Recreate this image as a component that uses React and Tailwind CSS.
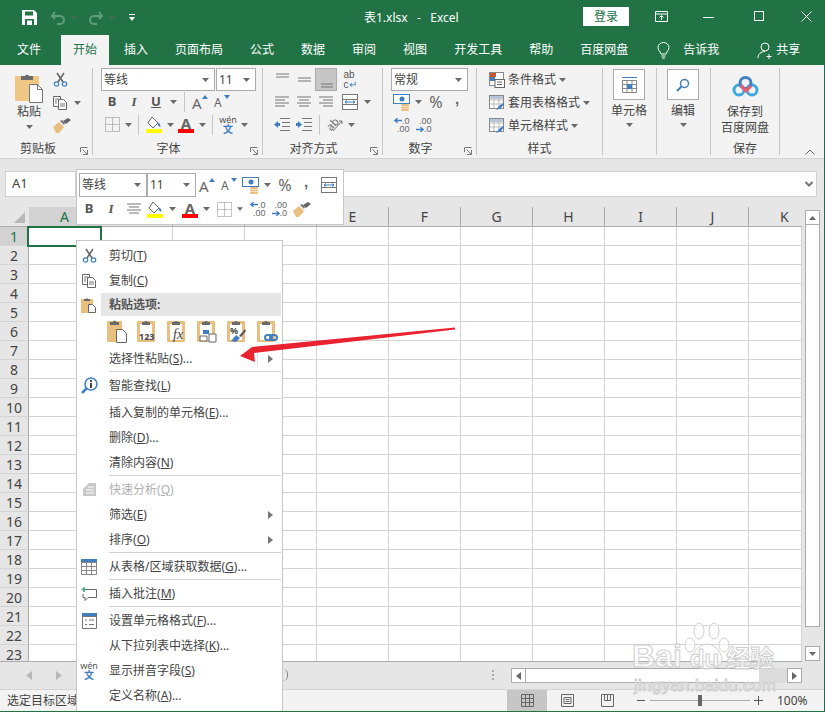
import React from "react";

const Caret = ({ className = "" }) => (
  <svg width="7" height="4" viewBox="0 0 7 4" className={className}><path d="M0 0h7L3.5 4z" fill="#6a6a6a" /></svg>
);

const Launcher = () => (
  <svg width="8" height="8" viewBox="0 0 8 8" fill="none" stroke="#777"><path d="M.5 5V.5H7.5" /><path d="M7.5 3v4.500H3M2.500 2.500l4.500 4.500" /></svg>
);

function Slot({ w = "w-[22px]", className = "", children }) {
  return <div className={`${w} h-full flex items-center justify-center shrink-0 ${className}`}>{children}</div>;
}

const VSep = ({ className = "" }) => <div className={`w-px h-[20px] bg-[#c6c6c6] shrink-0 ${className}`} />;

function Select({ text, w, h = "h-[23px]" }) {
  return (
    <div className={`${w} ${h} bg-white border border-[#ababab] flex items-center justify-between pl-[2px] pr-[5px] text-[12px] text-[#444] shrink-0`}>
      <span>{text}</span>
      <Caret />
    </div>
  );
}

function Group({ w, label, launcher, labelClass = "", children }) {
  return (
    <div className={`${w} relative flex flex-col h-[87px] border-r border-[#c6c6c6] shrink-0`}>
      <div className="flex-1 min-h-0">{children}</div>
      {label && <div className={`h-[12px] leading-[12px] text-[12px] text-[#444] text-center ${labelClass}`}>{label}</div>}
      {launcher && <div className="absolute right-[4px] bottom-0"><Launcher /></div>}
    </div>
  );
}

const Cut = ({ s = 15 }) => (
  <svg width={s} height={s} viewBox="0 0 15 15" fill="none">
    <path d="M4 1l6 9M11 1L5 10" stroke="#666" strokeWidth="1.6" />
    <circle cx="3.500" cy="12" r="2.200" stroke="#3f7fbf" strokeWidth="1.200" />
    <circle cx="11.500" cy="12" r="2.200" stroke="#3f7fbf" strokeWidth="1.200" />
  </svg>
);

const Copy = () => (
  <svg width="15" height="15" viewBox="0 0 15 15" fill="#fff" stroke="#666">
    <path d="M.5 1.500h7v10h-7z" /><path d="M5.500 4.500h5l3 3v7h-8z" />
    <path d="M2 4h4M2 6h2M2 8h2M7 9h5M7 11h5" fill="none" stroke="#777" />
  </svg>
);

const Brush = () => (
  <svg width="18" height="15" viewBox="0 0 18 15">
    <path d="M0 9l6-5 5 5-5 6H3z" fill="#e9bf80" />
    <path d="M7 3l2-1 3 3-1 2z" fill="#777" /><path d="M10 3l5-3 3 2-5 4z" fill="#666" />
  </svg>
);

const Clip = ({ children }) => (
  <svg width="20" height="24" viewBox="0 0 20 24" className="overflow-visible">
    <rect x="0" y="2" width="18" height="21" rx="1" fill="#e9bf80" />
    <rect x="3" y="5" width="12" height="16" fill="#fff" />
    <path d="M5 3h2.500a1.600 1.600 0 013 0H13v3H5z" fill="#6a6a6a" />
    {children}
  </svg>
);

const PasteLarge = () => (
  <svg width="28" height="30" viewBox="0 0 28 30">
    <rect x="0" y="3" width="24" height="25" rx="1" fill="#efc683" />
    <path d="M6 3h4a2.200 2.200 0 014 0h4v4H6z" fill="#6a6a6a" />
    <path d="M14.500 11.500h8l5 5v13h-13z" fill="#fff" stroke="#777" />
    <path d="M22.500 11.500v5h5" fill="none" stroke="#777" />
  </svg>
);

const PasteSmall = () => (
  <svg width="16" height="16" viewBox="0 0 16 16">
    <rect x="0" y="2" width="12" height="14" fill="#e9bf80" />
    <path d="M3 2h2a1.200 1.200 0 012 0h2v2H3z" fill="#6a6a6a" />
    <path d="M7.500 7.500h4l3 3v5h-7z" fill="#fff" stroke="#666" />
  </svg>
);

const Fill = () => (
  <svg width="16" height="17" viewBox="0 0 16 17">
    <path d="M6 1l6 6-5 5-5-5z" fill="#fff" stroke="#666" />
    <path d="M11 6l3 2 .5 3-2-1z" fill="#3f7fbf" />
    <rect x="0" y="13" width="16" height="4" fill="#ffff00" />
  </svg>
);

const FontColor = () => (
  <div className="relative w-[16px] h-[17px] flex justify-center">
    <span className="text-[15px] leading-[14px] font-bold text-[#666]">A</span>
    <div className="absolute bottom-0 left-0 right-0 h-[4px] bg-[#ff0000]" />
  </div>
);

const Borders = () => (
  <svg width="15" height="15" viewBox="0 0 15 15" fill="none" stroke="#888" strokeDasharray="1 1">
    <path d="M.5 .5h14v14H.5zM7.500 .5v14M.5 7.500h14" />
  </svg>
);

const Grow = ({ up }) => (
  <div className="relative w-[16px] h-[15px] flex items-end">
    <span className={`${up ? "text-[15px]" : "text-[12px]"} leading-[14px] text-[#666]`}>A</span>
    <svg width="6" height="4" viewBox="0 0 6 4" className="absolute right-0 top-0">
      <path d={up ? "M0 4h6L3 0z" : "M0 0h6L3 4z"} fill="#3f7fbf" />
    </svg>
  </div>
);

const Lines = ({ kind }) => {
  const d = {
    top: "M2 2h13M2 5h13",
    middle: "M2 6h13M2 9h13",
    bottom: "M3 12h12M3 15h12",
    left: "M1 3h14M1 6h10M1 9h14M1 12h10",
    center: "M1 3h14M3 6h10M1 9h14M3 12h10",
    right: "M1 3h14M5 6h10M1 9h14M5 12h10",
  }[kind];
  return <svg width="16" height="16" viewBox="0 0 16 16" fill="none" stroke="#777"><path d={d} /></svg>;
};

const Merge = () => (
  <svg width="16" height="16" viewBox="0 0 16 16" fill="none">
    <rect x=".5" y=".5" width="15" height="15" fill="#fff" stroke="#777" />
    <path d="M.5 5.500h15M.5 10.500h15" stroke="#777" />
    <path d="M3 8h10M3 8l2-1.500M3 8l2 1.500M13 8l-2-1.500M13 8l-2 1.500" stroke="#3f7fbf" />
  </svg>
);

const Indent = ({ flip }) => (
  <svg width="16" height="13" viewBox="0 0 16 13" fill="none">
    <path d="M6 .5h10M8 4.500h8M8 8.500h8M6 12.500h10" stroke="#777" />
    <path d={flip ? "M6 6.500L2 3v2H0v3h2v2z" : "M0 6.500L4 3v2h2v3H4v2z"} fill="#3f7fbf" />
  </svg>
);

const Orient = () => (
  <div className="relative w-[18px] h-[16px]">
    <span className="absolute left-0 top-[1px] text-[11px] leading-[12px] text-[#666] -rotate-45">ab</span>
    <svg width="18" height="16" viewBox="0 0 18 16" fill="none" className="absolute inset-0">
      <path d="M7 14L16 4M13 4h3v3" stroke="#777" />
    </svg>
  </div>
);

const Currency = () => (
  <svg width="18" height="17" viewBox="0 0 18 17">
    <rect x=".5" y=".5" width="16" height="9" fill="#fff" stroke="#3f7fbf" />
    <circle cx="9" cy="5" r="2.500" fill="#3f7fbf" />
    <rect x="8" y="10" width="8" height="2" rx="1" fill="#e9bf80" />
    <rect x="8" y="12.500" width="8" height="2" rx="1" fill="#e9bf80" />
    <rect x="8" y="15" width="8" height="2" rx="1" fill="#e9bf80" />
  </svg>
);

const Dec = ({ more }) => (
  <div className="w-[15px] h-[16px] relative text-[9px] leading-[8px] text-[#666] flex flex-col items-end font-['Liberation_Sans',sans-serif]">
    <span>{more ? ".00" : ".0"}</span>
    <span>{more ? ".0" : ".00"}</span>
    <svg width="8" height="7" viewBox="0 0 9 7" className={`absolute -left-px ${more ? "bottom-0" : "top-0"}`}>
      <path d={more ? "M0 3.500h7M5 1l3 2.500L5 6" : "M9 3.500H2M4 1L1 3.500 4 6"} fill="none" stroke="#3f7fbf" strokeWidth="1.500" />
    </svg>
  </div>
);

const Wen = () => (
  <div className="flex flex-col items-center leading-none">
    <span className="text-[9px] leading-[9px] text-[#555]">wén</span>
    <span className="text-[10px] leading-[10px] font-bold text-[#3f7fbf]">文</span>
  </div>
);

const StyleIcon = ({ first }) => (
  <svg width="16" height="16" viewBox="0 0 16 16">
    <rect x=".5" y=".5" width="14" height="13" fill="#fff" stroke="#888" />
    {first ? (
      <>
        <rect x="1" y="1" width="6" height="4" fill="#d2532f" />
        <rect x="1" y="5" width="5" height="4" fill="#3f7fbf" />
        <rect x="6" y="7.500" width="9.500" height="8" fill="#fff" stroke="#666" />
        <path d="M8 10h5M8 12.500h5" stroke="#666" />
      </>
    ) : (
      <>
        <rect x="1" y="1" width="13" height="3" fill="#b7c7dc" />
        <path d="M5 1v12M10 1v12M1 5h13M1 9h13" stroke="#bbb" />
        <path d="M7 15l3-4 4-3 1 1-3 4z" fill="#3f7fbf" />
      </>
    )}
  </svg>
);

function TitleBar() {
  return (
    <div className="h-[35px] bg-[#217346] flex items-center relative shrink-0 text-white">
      <div className="flex items-center pl-[22px]">
        <svg width="15" height="15" viewBox="0 0 15 15">
          <path d="M0 0h12l3 3v12H0z" fill="#fff" />
          <rect x="3" y="1.500" width="8" height="4" fill="#217346" />
          <rect x="3" y="9" width="9" height="6" fill="#217346" />
          <rect x="5" y="10.500" width="5" height="4.500" fill="#fff" />
        </svg>
        <svg width="14" height="14" viewBox="0 0 14 14" fill="none" stroke="#5f9d7d" strokeWidth="2" className="ml-[14px]">
          <path d="M1 5h8a4 4 0 010 8H6M4 1L1 5l3 3" />
        </svg>
        <Caret className="ml-[5px] opacity-40" />
        <svg width="14" height="14" viewBox="0 0 14 14" fill="none" stroke="#5f9d7d" strokeWidth="2" className="ml-[12px]">
          <path d="M13 5H5a4 4 0 000 8h3M10 1l3 4-3 3" />
        </svg>
        <Caret className="ml-[5px] opacity-40" />
        <svg width="6" height="7" viewBox="0 0 6 7" className="ml-[14px]"><path d="M0 0h6v1H0zM0 3h6L3 7z" fill="#fff" /></svg>
      </div>
      <div className="absolute left-[364px] text-[12px] whitespace-pre">表1.xlsx   -   Excel</div>
      <div className="absolute left-[583px] top-[7px] w-[46px] h-[19px] bg-white text-[#217346] text-[12px] flex items-center justify-center">登录</div>
      <svg width="13" height="11" viewBox="0 0 13 11" fill="none" stroke="#fff" className="absolute left-[655px] top-[11px]">
        <path d="M.5 .5h12v10H.5zM.5 3h12M6.500 9V5M4.500 6.500l2-2 2 2" />
      </svg>
      <div className="absolute left-[703px] top-[17px] w-[11px] h-px bg-white" />
      <div className="absolute left-[754px] top-[11px] w-[10px] h-[10px] border border-white" />
      <svg width="11" height="11" viewBox="0 0 11 11" stroke="#fff" className="absolute left-[801px] top-[11px]"><path d="M.5 .5l10 10M10.500 .5l-10 10" /></svg>
    </div>
  );
}

function Tabs() {
  const names = ["插入", "页面布局", "公式", "数据", "审阅", "视图", "开发工具", "帮助", "百度网盘"];
  return (
    <div className="h-[30px] bg-[#217346] flex items-center pl-[17px] gap-[27px] text-[12px] text-white relative shrink-0">
      <span className="mr-[5px]">文件</span>
      <div className="h-full -mx-[12px] px-[12px] bg-[#f3f3f3] text-[#217346] flex items-center">开始</div>
      {names.map((n) => <span key={n}>{n}</span>)}
      <svg width="13" height="17" viewBox="0 0 13 17" fill="none" stroke="#fff" className="ml-[2px]">
        <path d="M4 12C3 9 1 8 1 5.500a5.500 5 0 0111 0C12 8 10 9 9 12zM4.500 14h4M5 16h3" />
      </svg>
      <span className="-ml-[14px]">告诉我</span>
      <div className="flex items-center gap-[2px] ml-[11px]">
        <svg width="17" height="17" viewBox="0 0 17 17" fill="none" stroke="#fff">
          <circle cx="8" cy="5" r="4" /><path d="M1 16c0-4 3-6.500 7-6.500M12 12v5M9.500 14.500h5" />
        </svg>
        <span>共享</span>
      </div>
    </div>
  );
}

function Ribbon() {
  return (
    <div className="h-[94px] bg-[#f3f3f3] border-b border-[#d4d4d4] flex pt-[3px] shrink-0">
      <Group w="w-[93px]" label="剪贴板" launcher labelClass="pr-[16px]">
        <div className="flex">
          <div className="w-[53px] pl-[5px] flex flex-col items-center pt-[5px]">
            <PasteLarge />
            <div className="mt-px h-[16px] leading-[16px] text-[12px] text-[#444]">粘贴</div>
            <Caret className="mt-[5px]" />
          </div>
          <div className="flex flex-col gap-[8px] pt-[4px]">
            <Cut />
            <div className="flex items-center gap-[6px]"><Copy /><Caret /></div>
            <Brush />
          </div>
        </div>
      </Group>

      <Group w="w-[170px]" label="字体" launcher labelClass="pr-[18px]">
        <div className="pl-[8px]">
          <div className="flex gap-px">
            <Select text="等线" w="w-[114px]" />
            <Select text="11" w="w-[40px]" />
          </div>
          <div className="flex items-center h-[22px] text-[#555]">
            <Slot><b className="text-[13px]">B</b></Slot>
            <Slot><i className="text-[13px] font-['Liberation_Serif',serif] font-bold">I</i></Slot>
            <Slot><u className="text-[13px] font-bold">U</u></Slot>
            <Slot w="w-[12px]"><Caret /></Slot>
            <VSep className="ml-[5px]" />
            <Slot className="ml-[4px]"><Grow up /></Slot>
            <Slot><Grow /></Slot>
          </div>
          <div className="flex items-center h-[23px]">
            <Slot><Borders /></Slot>
            <Slot w="w-[10px]"><Caret /></Slot>
            <VSep className="ml-[5px]" />
            <Slot className="ml-[4px]"><Fill /></Slot>
            <Slot w="w-[10px]"><Caret /></Slot>
            <Slot><FontColor /></Slot>
            <Slot w="w-[10px]"><Caret /></Slot>
            <VSep className="ml-[5px]" />
            <Slot className="ml-[4px]"><Wen /></Slot>
            <Slot w="w-[10px]"><Caret /></Slot>
          </div>
        </div>
      </Group>

      <Group w="w-[120px]" label="对齐方式" launcher labelClass="pr-[18px]">
        <div className="pl-[8px]">
          <div className="flex h-[23px]">
            <Slot><Lines kind="top" /></Slot>
            <Slot><Lines kind="middle" /></Slot>
            <Slot className="bg-[#c6c6c6] border border-[#ababab]"><Lines kind="bottom" /></Slot>
            <Slot className="ml-[2px]">
              <div className="flex flex-col text-[10px] leading-[10px] text-[#555] font-['Liberation_Sans',sans-serif]">
                <span>ab</span>
                <span>c<span className="text-[#3f7fbf]">↵</span></span>
              </div>
            </Slot>
          </div>
          <div className="flex items-center h-[22px]">
            <Slot><Lines kind="left" /></Slot>
            <Slot><Lines kind="center" /></Slot>
            <Slot><Lines kind="right" /></Slot>
            <Slot className="ml-[2px]"><Merge /></Slot>
            <Slot w="w-[12px]"><Caret /></Slot>
          </div>
          <div className="flex items-center h-[23px]">
            <Slot><Indent /></Slot>
            <Slot><Indent flip /></Slot>
            <VSep className="ml-[4px]" />
            <Slot className="ml-[4px]"><Orient /></Slot>
            <Slot w="w-[10px]"><Caret /></Slot>
          </div>
        </div>
      </Group>

      <Group w="w-[94px]" label="数字" launcher labelClass="pr-[18px]">
        <div className="pl-[8px]">
          <Select text="常规" w="w-[77px]" />
          <div className="flex items-center h-[22px]">
            <Slot><Currency /></Slot>
            <Slot w="w-[10px]"><Caret /></Slot>
            <Slot w="w-[26px]"><span className="text-[16px] text-[#666]">%</span></Slot>
            <Slot w="w-[16px]"><b className="mb-[8px] text-[15px] leading-none text-[#666] font-['Liberation_Sans',sans-serif]">,</b></Slot>
          </div>
          <div className="flex items-center h-[23px]">
            <Slot><Dec /></Slot>
            <Slot><Dec more /></Slot>
          </div>
        </div>
      </Group>

      <Group w="w-[126px]" label="样式">
        <div className="pl-[12px] text-[12px] text-[#444]">
          {[["条件格式", true], ["套用表格格式", false], ["单元格样式", false]].map(([t, f]) => (
            <div key={t} className="flex items-center h-[23px] gap-[3px]">
              <StyleIcon first={f} />
              <span>{t}</span>
              <Caret />
            </div>
          ))}
        </div>
      </Group>

      <Group w="w-[54px]">
        <div className="flex flex-col items-center pr-px text-[12px] text-[#444]">
          <div className="mt-px w-[32px] h-[31px] bg-white border border-[#ababab] flex items-center justify-center">
            <svg width="15" height="17" viewBox="0 0 15 17" fill="none" stroke="#888">
              <path d="M0 1.500h15" stroke="#3f7fbf" /><path d="M.5 4.500h14v12H.5zM.5 8.500h14M.5 12.500h14M5 4.500v12M10 4.500v12" />
              <rect x="5" y="8" width="5" height="5" fill="#3f7fbf" stroke="none" />
            </svg>
          </div>
          <div className="mt-[3px] h-[16px] leading-[16px]">单元格</div>
          <Caret className="mt-[4px]" />
        </div>
      </Group>

      <Group w="w-[54px]">
        <div className="flex flex-col items-center pr-px text-[12px] text-[#444]">
          <div className="mt-px w-[32px] h-[31px] bg-white border border-[#ababab] flex items-center justify-center">
            <svg width="14" height="14" viewBox="0 0 14 14" fill="none" stroke="#3f7fbf">
              <circle cx="8.500" cy="5.500" r="4" strokeWidth="1.500" /><path d="M5.500 8.500L1 13" strokeWidth="2" />
            </svg>
          </div>
          <div className="mt-[3px] h-[16px] leading-[16px]">编辑</div>
          <Caret className="mt-[4px]" />
        </div>
      </Group>

      <Group w="w-[69px]" label="保存">
        <div className="flex flex-col items-center text-[12px] leading-[16px] text-[#444]">
          <svg width="27" height="21" viewBox="0 0 27 21" fill="none" className="mt-[8px] mb-[7px]">
            <circle cx="7" cy="14" r="5" stroke="#3fa7e0" strokeWidth="3" />
            <circle cx="20" cy="14" r="5" stroke="#3fa7e0" strokeWidth="3" />
            <circle cx="13.500" cy="7" r="5.500" stroke="#3f7fbf" strokeWidth="3" />
            <path d="M9 9c2 3 3 4 5 6 2-2 3-3 5-5" stroke="#ef5a6f" strokeWidth="3" />
          </svg>
          <div>保存到</div>
          <div>百度网盘</div>
        </div>
      </Group>

      <div className="flex-1 flex items-end justify-end pr-[9px] pb-[3px]">
        <svg width="10" height="6" viewBox="0 0 10 6" fill="none" stroke="#666"><path d="M.5 5.500L5 1l4.500 4.500" /></svg>
      </div>
    </div>
  );
}

function FormulaBar() {
  return (
    <div className="h-[48px] flex items-start pt-[12px] pl-[5px] pr-[7px] shrink-0">
      <div className="w-[71px] h-[26px] bg-white border border-[#d0d0d0] pl-[6px] flex items-center text-[13px] text-[#444]">A1</div>
      <div className="flex-1 h-[26px] bg-white border border-[#d0d0d0] flex items-center justify-end pr-[3px]">
        <svg width="8" height="6" viewBox="0 0 8 6" fill="none" stroke="#777" strokeWidth="2"><path d="M.5 1L4 4.500 7.500 1" /></svg>
      </div>
    </div>
  );
}

const COLS = ["A", "B", "C", "D", "E", "F", "G", "H", "I", "J", "K"];
const ROWS = Array.from({ length: 23 }, (_, i) => i + 1);

function Sheet() {
  return (
    <div className="h-[455px] flex shrink-0">
      <div className="w-[802px] h-[455px] overflow-hidden border-b border-[#ababab] bg-white shrink-0">
        <div className="flex h-[20px] bg-[#e6e6e6] border-b border-[#ababab] text-[14px] text-[#444]">
          <div className="w-[29px] border-r border-transparent flex items-end justify-end pr-[3px] pb-[3px]">
            <svg width="11" height="11" viewBox="0 0 11 11"><path d="M11 0v11H0z" fill="#b8b8b8" /></svg>
          </div>
          {COLS.map((c) => (
            <div
              key={c}
              className={
                c === "A"
                  ? "w-[72px] flex items-center justify-center bg-[#d2d2d2] text-[#217346] border-r border-[#ababab]"
                  : c === "K"
                    ? "w-[53px] flex items-center justify-start pl-[31px] border-r border-transparent"
                    : "w-[72px] flex items-center justify-center border-r border-[#ababab]"
              }
            >
              {c}
            </div>
          ))}
        </div>
        {ROWS.map((r) => (
          <div key={r} className="flex h-[19px] border-b border-[#d4d4d4]">
            <div className={`w-[29px] -mb-px flex items-center justify-center text-[14px] border-r border-[#ababab] border-b border-b-[#d4d4d4] ${r === 1 ? "bg-[#d2d2d2] text-[#217346]" : "bg-[#e6e6e6] text-[#444]"}`}>
              {r}
            </div>
            {COLS.map((c) => (
              <div key={c} className={`${c === "K" ? "w-[53px]" : "w-[72px]"} relative border-r border-[#d4d4d4]`}>
                {r === 1 && c === "A" && (
                  <div className="absolute -left-[2px] -top-px w-[75px] h-[21px] border-2 border-[#217346]" />
                )}
              </div>
            ))}
          </div>
        ))}
      </div>
      <div className="flex-1 flex flex-col pl-[3px] pt-[3px] pb-px">
        <div className="w-[15px] h-[15px] bg-white border border-[#ababab] flex items-center justify-center">
          <svg width="7" height="4" viewBox="0 0 7 4"><path d="M0 4h7L3.500 0z" fill="#666" /></svg>
        </div>
        <div className="w-[15px] h-[402px] bg-white border border-t-0 border-[#ababab]" />
        <div className="flex-1" />
        <div className="w-[15px] h-[15px] bg-white border border-[#ababab] flex items-center justify-center">
          <Caret />
        </div>
      </div>
    </div>
  );
}

function SheetBar() {
  return (
    <div className="h-[27px] flex items-start pt-[6px] pl-[26px] relative shrink-0">
      <div className="flex items-center gap-[24px] h-[15px]">
        <svg width="6" height="9" viewBox="0 0 6 9"><path d="M6 0v9L0 4.500z" fill="#b8b8b8" /></svg>
        <svg width="6" height="9" viewBox="0 0 6 9"><path d="M0 0v9l6-4.500z" fill="#b8b8b8" /></svg>
      </div>
      <div className="ml-[221px] mt-px w-[5px] h-[12px] border-r border-[#888] rounded-r-full" />
      <div className="ml-[204px] mt-[2px] flex flex-col gap-[2px]">
        <div className="w-[2px] h-[2px] bg-[#aaa]" /><div className="w-[2px] h-[2px] bg-[#aaa]" /><div className="w-[2px] h-[2px] bg-[#aaa]" />
      </div>
      <div className="ml-[17px] flex h-[15px]">
        <div className="w-[15px] h-[15px] bg-white border border-[#ababab] flex items-center justify-center">
          <svg width="5" height="8" viewBox="0 0 5 8"><path d="M5 0v8L0 4z" fill="#666" /></svg>
        </div>
        <div className="w-[233px] h-[15px] bg-white border-y border-[#ababab]" />
        <div className="w-[28px] h-[15px] bg-[#dcdcdc]" />
        <div className="w-[15px] h-[15px] bg-white border border-[#ababab] flex items-center justify-center">
          <svg width="5" height="8" viewBox="0 0 5 8"><path d="M0 0v8l5-4z" fill="#666" /></svg>
        </div>
      </div>
    </div>
  );
}

function StatusBar() {
  return (
    <div className="h-[22px] bg-[#f3f3f3] border-t border-[#d4d4d4] flex items-stretch pl-[7px] text-[12px] text-[#444] shrink-0">
      <div className="w-[500px] flex items-center">选定目标区域</div>
      <div className="w-[40px] bg-[#c6c6c6] flex items-center justify-center">
        <svg width="13" height="13" viewBox="0 0 13 13" fill="none" stroke="#666"><path d="M.5 .5h12v12H.5zM4.500 .5v12M8.500 .5v12M.5 4.500h12M.5 8.500h12" /></svg>
      </div>
      <div className="w-[40px] flex items-center justify-center">
        <svg width="13" height="13" viewBox="0 0 13 13" fill="none" stroke="#666"><path d="M.5 .5h12v12H.5zM3 3.500h7v6H3zM4.500 5.500h4M4.500 7.500h4" /></svg>
      </div>
      <div className="w-[40px] flex items-center justify-center">
        <svg width="13" height="13" viewBox="0 0 13 13" fill="none" stroke="#666"><path d="M.5 .5h12v12H.5zM3.500 .5v6h6v-6M6.500 .5v6" /></svg>
      </div>
      <div className="flex items-center ml-[10px]">
        <div className="w-[8px] h-px bg-[#555]" />
        <div className="ml-[5px] w-[100px] h-px bg-[#aaa] relative flex justify-center items-center">
          <div className="w-[4px] h-[11px] bg-[#666]" />
        </div>
        <svg width="9" height="9" viewBox="0 0 9 9" stroke="#555" className="ml-[4px]"><path d="M0 4.500h9M4.500 0v9" /></svg>
        <span className="ml-[14px] text-[12px]">100%</span>
      </div>
    </div>
  );
}

function MiniToolbar() {
  return (
    <div className="absolute left-[76px] top-[169px] w-[268px] h-[56px] bg-white border border-[#c6c6c6] px-[2px] pt-[3px] z-10">
      <div className="flex items-center h-[24px]">
        <Select text="等线" w="w-[68px]" h="h-[24px]" />
        <div className="w-px" />
        <Select text="11" w="w-[49px]" h="h-[24px]" />
        <Slot><Grow up /></Slot>
        <Slot><Grow /></Slot>
        <Slot><Currency /></Slot>
        <Slot w="w-[10px]"><Caret /></Slot>
        <Slot w="w-[26px]"><span className="text-[16px] text-[#666]">%</span></Slot>
        <Slot w="w-[16px]"><b className="mb-[8px] text-[15px] leading-none text-[#666] font-['Liberation_Sans',sans-serif]">,</b></Slot>
        <Slot w="w-[30px]"><Merge /></Slot>
      </div>
      <div className="flex items-center h-[22px] mt-[1px] text-[#555]">
        <Slot w="w-[20px]"><b className="text-[13px]">B</b></Slot>
        <Slot w="w-[24px]"><i className="text-[13px] font-['Liberation_Serif',serif] font-bold">I</i></Slot>
        <Slot><Lines kind="center" /></Slot>
        <Slot w="w-[20px]"><Fill /></Slot>
        <Slot w="w-[14px]"><Caret /></Slot>
        <Slot><FontColor /></Slot>
        <Slot w="w-[10px]"><Caret /></Slot>
        <Slot w="w-[26px]"><Borders /></Slot>
        <Slot w="w-[6px]"><Caret /></Slot>
        <Slot w="w-[30px]"><Dec /></Slot>
        <Slot w="w-[14px]"><Dec more /></Slot>
        <Slot w="w-[30px]"><Brush /></Slot>
      </div>
    </div>
  );
}

function Item({ icon, label, k, tail = "", disabled, arrow }) {
  return (
    <div className={`flex items-center h-[25px] text-[12px] ${disabled ? "text-[#b1b1b1]" : "text-[#444]"}`}>
      <div className="w-[24px] flex items-center justify-center shrink-0">{icon}</div>
      <div className="pl-[8px] flex-1 whitespace-nowrap">
        {label}{k && <>(<u>{k}</u>)</>}{tail}
      </div>
      {arrow && (
        <svg width="5" height="8" viewBox="0 0 5 8" className="mr-[9px]"><path d="M0 0v8l5-4z" fill="#777" /></svg>
      )}
    </div>
  );
}

const MenuSep = () => (
  <div className="h-[2px] ml-[32px] mr-px"><div className="h-px bg-[#d4d4d4]" /></div>
);

function ContextMenu() {
  return (
    <div className="absolute left-[76px] top-[240px] w-[207px] h-[472px] bg-white border border-[#c6c6c6] pt-[2px] z-10 overflow-hidden">
      <Item icon={<Cut />} label="剪切" k="T" />
      <Item icon={<Copy />} label="复制" k="C" />
      <div className="flex items-center h-[23px]">
        <div className="w-[24px] flex items-center justify-center"><PasteSmall /></div>
        <div className="flex-1 h-full bg-[#e6e6e6] mr-px pl-[8px] flex items-center text-[12px] font-bold text-[#555]">粘贴选项:</div>
      </div>
      <div className="flex items-center h-[30px] pl-[30px] gap-[10px]">
        <svg width="20" height="24" viewBox="0 0 20 24">
          <rect x="0" y="2" width="15" height="21" rx="1" fill="#e9bf80" />
          <path d="M3 3h3a1.500 1.500 0 013 0h3v3H3z" fill="#6a6a6a" />
          <path d="M9.500 10.500h6l4 4v9h-10z" fill="#fff" stroke="#666" />
        </svg>
        <Clip><text x="2" y="21" fontSize="9" fontWeight="700" fill="#444" fontFamily="Noto Sans">123</text></Clip>
        <Clip><text x="6" y="20" fontSize="14" fontStyle="italic" fill="#444" fontFamily="Liberation Serif">fx</text></Clip>
        <Clip>
          <path d="M6 11h6v4H6z" fill="#3f7fbf" /><path d="M12 15h7v8h-7z" fill="#fff" stroke="#666" /><path d="M3 17h7v5H3z" fill="#fff" stroke="#666" />
        </Clip>
        <Clip>
          <text x="3" y="15" fontSize="9" fontWeight="700" fill="#444" fontFamily="Noto Sans">%</text>
          <path d="M4 22l5-6 4 3-4 4z" fill="#3f7fbf" /><path d="M12 17l6-7 1 2-5 6z" fill="#555" />
        </Clip>
        <Clip>
          <rect x="8" y="16" width="7" height="5" rx="2.500" fill="none" stroke="#3f7fbf" strokeWidth="2" />
          <rect x="13" y="16" width="7" height="5" rx="2.500" fill="none" stroke="#3f7fbf" strokeWidth="2" />
        </Clip>
      </div>
      <div className="relative">
        <Item label="选择性粘贴" k="S" tail="..." arrow />
        <div className="absolute right-[24px] top-[5px] w-px h-[16px] bg-[#e0e0e0]" />
      </div>
      <MenuSep />
      <Item
        icon={
          <svg width="17" height="17" viewBox="0 0 17 17">
            <circle cx="10" cy="7" r="6" fill="#fff" stroke="#3f7fbf" strokeWidth="1.500" />
            <path d="M5.500 11.500L1 16" stroke="#3f7fbf" strokeWidth="2.500" />
            <path d="M9 3h2v2H9zM9 6h2v5H9z" fill="#444" />
          </svg>
        }
        label="智能查找"
        k="L"
      />
      <MenuSep />
      <Item label="插入复制的单元格" k="E" tail="..." />
      <Item label="删除" k="D" tail="..." />
      <Item label="清除内容" k="N" />
      <MenuSep />
      <Item
        disabled
        icon={
          <svg width="15" height="15" viewBox="0 0 15 15"><path d="M1 14h13V1H7L1 7z" fill="#c8c8c8" /><path d="M6 5h6M4 8h8M4 11h8" stroke="#fff" /></svg>
        }
        label="快速分析"
        k="Q"
      />
      <Item label="筛选" k="E" arrow />
      <Item label="排序" k="O" arrow />
      <MenuSep />
      <Item
        icon={
          <svg width="16" height="16" viewBox="0 0 16 16" fill="none" stroke="#888">
            <rect x="0" y="0" width="16" height="4" fill="#3f7fbf" stroke="none" />
            <path d="M.5 3.500h15v12H.5zM.5 7.500h15M.5 11.500h15M5.500 3.500v12M10.500 3.500v12" />
          </svg>
        }
        label="从表格/区域获取数据"
        k="G"
        tail="..."
      />
      <MenuSep />
      <Item
        icon={
          <svg width="16" height="14" viewBox="0 0 16 14" fill="none" stroke="#666">
            <path d="M5 2.500h10.500v8H7l-3 3v-3H2V7" />
            <path d="M3 0v5M.5 2.500h5" stroke="#4d9b7c" strokeWidth="1.500" />
          </svg>
        }
        label="插入批注"
        k="M"
      />
      <MenuSep />
      <Item
        icon={
          <svg width="15" height="16" viewBox="0 0 15 16" fill="none" stroke="#777">
            <rect x="0" y="0" width="15" height="4" fill="#3f7fbf" stroke="none" />
            <path d="M.5 3.500h14v12H.5zM3 7h2M7 7h5M3 11.500h2M7 11.500h5" />
          </svg>
        }
        label="设置单元格格式"
        k="F"
        tail="..."
      />
      <Item label="从下拉列表中选择" k="K" tail="..." />
      <Item icon={<Wen />} label="显示拼音字段" k="S" />
      <Item label="定义名称" k="A" tail="..." />
    </div>
  );
}

function Watermark() {
  const outline = "[-webkit-text-stroke:1px_#cfcfcf] text-white/70";
  return (
    <div className="absolute left-[632px] top-[622px] w-[150px] h-[78px] z-20 pointer-events-none flex flex-col">
      <svg width="48" height="48" viewBox="0 0 48 48" fill="#ffffff99" stroke="#d0d0d0" className="absolute left-[51px] top-0">
        <ellipse cx="7" cy="23" rx="5" ry="7" /><ellipse cx="16" cy="9" rx="5" ry="8" /><ellipse cx="31" cy="9" rx="5" ry="8" /><ellipse cx="41" cy="23" rx="5" ry="7" />
        <path d="M24 22c-7 0-15 8-15 15 0 7 7 10 15 10s15-3 15-10c0-7-8-15-15-15z" />
      </svg>
      <div className={`mt-[18px] flex items-baseline h-[36px] leading-none relative ${outline}`}>
        <span className="text-[32px] font-bold font-['Liberation_Sans',sans-serif]">Bai</span>
        <span className="ml-[8px] text-[24px] font-bold font-['Liberation_Sans',sans-serif]">du</span>
        <span className="ml-[7px] text-[24px] font-bold">经验</span>
      </div>
      <div className={`mt-[1px] ml-[2px] text-[17px] leading-[18px] tracking-[0.3px] whitespace-nowrap font-['Liberation_Sans',sans-serif] ${outline}`}>jingyan.baidu.com</div>
    </div>
  );
}

function RedArrow() {
  return (
    <svg width="225" height="40" viewBox="0 0 225 40" className="absolute left-[236px] top-[325px] z-20">
      <path d="M219 2.500L16 22 4 31l15 6 -1-9L219 4.500z" fill="#ea2230" />
    </svg>
  );
}

export default function App() {
  return (
    <div className="relative w-[825px] h-[712px] overflow-hidden flex flex-col bg-[#e6e6e6] border-r border-b border-[#217346] font-['Noto_Sans','Noto_Sans_CJK_SC',sans-serif]">
      <TitleBar />
      <Tabs />
      <Ribbon />
      <FormulaBar />
      <Sheet />
      <SheetBar />
      <StatusBar />
      <MiniToolbar />
      <ContextMenu />
      <RedArrow />
      <Watermark />
    </div>
  );
}
